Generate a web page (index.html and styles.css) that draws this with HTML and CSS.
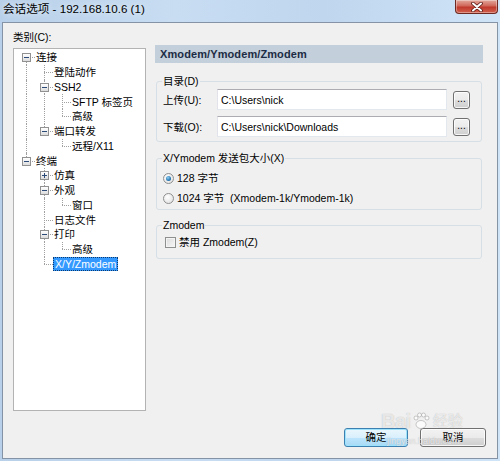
FILE: index.html
```
<!DOCTYPE html>
<html lang="zh-CN">
<head>
<meta charset="utf-8">
<title>会话选项</title>
<link rel="stylesheet" href="styles.css">
</head>
<body>
<div class="window">
  <div class="titlebar">
    <span class="title">会话选项 - 192.168.10.6 (1)</span>
    <div class="close">
      <svg width="14" height="10" viewBox="0 0 14 10"><path d="M3 1.5 L11 8.5 M11 1.5 L3 8.5" stroke="#5a1a14" stroke-width="3.6" stroke-linecap="round"/><path d="M3 1.5 L11 8.5 M11 1.5 L3 8.5" stroke="#ffffff" stroke-width="2" stroke-linecap="round"/></svg>
    </div>
  </div>
  <div class="client">
    <div class="main">
      <div class="left">
        <div class="cat-label">类别(C):</div>
        <div class="tree">
          <div class="row"><span class="c f"><i class="bx minus"></i></span><span class="lbl">连接</span></div>
          <div class="row"><span class="c v"></span><span class="c t"></span><span class="lbl">登陆动作</span></div>
          <div class="row"><span class="c v"></span><span class="c t"><i class="bx minus"></i></span><span class="lbl">SSH2</span></div>
          <div class="row"><span class="c v"></span><span class="c v"></span><span class="c t"></span><span class="lbl">SFTP 标签页</span></div>
          <div class="row"><span class="c v"></span><span class="c v"></span><span class="c l"></span><span class="lbl">高级</span></div>
          <div class="row"><span class="c v"></span><span class="c l"><i class="bx minus"></i></span><span class="lbl">端口转发</span></div>
          <div class="row"><span class="c v"></span><span class="c"></span><span class="c l"></span><span class="lbl">远程/X11</span></div>
          <div class="row"><span class="c l"><i class="bx minus"></i></span><span class="lbl">终端</span></div>
          <div class="row"><span class="c"></span><span class="c t"><i class="bx plus"></i></span><span class="lbl">仿真</span></div>
          <div class="row"><span class="c"></span><span class="c t"><i class="bx minus"></i></span><span class="lbl">外观</span></div>
          <div class="row"><span class="c"></span><span class="c v"></span><span class="c l"></span><span class="lbl">窗口</span></div>
          <div class="row"><span class="c"></span><span class="c t"></span><span class="lbl">日志文件</span></div>
          <div class="row"><span class="c"></span><span class="c t"><i class="bx minus"></i></span><span class="lbl">打印</span></div>
          <div class="row"><span class="c"></span><span class="c v"></span><span class="c l"></span><span class="lbl">高级</span></div>
          <div class="row"><span class="c"></span><span class="c l"></span><span class="lbl sel">X/Y/Zmodem</span></div>
        </div>
      </div>
      <div class="right">
        <div class="header">Xmodem/Ymodem/Zmodem</div>
        <fieldset class="group g1">
          <legend>目录(D)</legend>
          <div class="frow">
            <span class="flabel">上传(U):</span>
            <input class="tbox" type="text" value="C:\Users\nick" readonly>
            <span class="browse">...</span>
          </div>
          <div class="frow">
            <span class="flabel">下载(O):</span>
            <input class="tbox" type="text" value="C:\Users\nick\Downloads" readonly>
            <span class="browse">...</span>
          </div>
        </fieldset>
        <fieldset class="group g2">
          <legend>X/Ymodem 发送包大小(X)</legend>
          <div class="opt"><span class="radio on"></span><span>128 字节</span></div>
          <div class="opt"><span class="radio"></span><span class="pre">1024 字节  (Xmodem-1k/Ymodem-1k)</span></div>
        </fieldset>
        <fieldset class="group g3">
          <legend>Zmodem</legend>
          <div class="opt chk"><span class="check"></span><span>禁用 Zmodem(Z)</span></div>
        </fieldset>
      </div>
    </div>
    <div class="buttons">
      <span class="btn default">确定</span>
      <span class="btn cancel">取消</span>
    </div>
    <div class="watermark">
      <div class="wm-top"><span class="wm-bai">Bai</span><svg class="wm-paw" width="18" height="18" viewBox="0 0 18 18"><ellipse cx="9" cy="12.5" rx="5" ry="4" fill="rgba(255,255,255,0.7)" stroke="rgba(140,140,140,0.45)"/><circle cx="4" cy="6" r="2" fill="rgba(255,255,255,0.7)" stroke="rgba(140,140,140,0.45)"/><circle cx="7.5" cy="3" r="2" fill="rgba(255,255,255,0.7)" stroke="rgba(140,140,140,0.45)"/><circle cx="11.5" cy="3" r="2" fill="rgba(255,255,255,0.7)" stroke="rgba(140,140,140,0.45)"/><circle cx="15" cy="6" r="2" fill="rgba(255,255,255,0.7)" stroke="rgba(140,140,140,0.45)"/></svg><span class="wm-jy">经验</span></div>
      <div class="wm-url">jingyan.baidu.com</div>
    </div>
  </div>
</div>
</body>
</html>
```
FILE: styles.css
```
* { box-sizing: border-box; }
html, body { margin: 0; padding: 0; }
body {
  width: 500px;
  height: 461px;
  overflow: hidden;
  font-family: "Liberation Sans", "Noto Sans CJK SC", sans-serif;
  font-size: 10.5px;
  color: #000;
  background: #bcd3ea;
}
.window {
  display: flex;
  flex-direction: column;
  width: 500px;
  height: 461px;
  background: linear-gradient(to right, #b8d0e9, #c8ddf2 35%, #bfd6ee 65%, #d0e4f7);
}
.titlebar {
  height: 22px;
  flex: none;
  display: flex;
  align-items: flex-start;
}
.title {
  padding-left: 3px;
  font-size: 11.6px;
  line-height: 18px;
  color: #000;
  text-shadow: 0 0 6px rgba(255,255,255,0.9);
}
.close {
  margin-left: auto;
  margin-right: 2px;
  width: 43px;
  height: 14px;
  border: 1px solid #6e2a22;
  border-top: none;
  border-radius: 0 0 4px 4px;
  background: linear-gradient(#e3a89c, #d0675a 45%, #c03a2c 55%, #d1604e);
  display: flex;
  align-items: center;
  justify-content: center;
  box-shadow: inset 0 0 0 1px rgba(255,255,255,0.35);
}
.client {
  position: relative;
  flex: 1;
  margin: 0 2px 2px 2px;
  background: #f0f0f0;
  border: 1px solid #8494a6;
  display: flex;
  flex-direction: column;
}
.main {
  display: flex;
  gap: 9px;
  padding: 7px 14px 0 10px;
}
.left {
  width: 133px;
  flex: none;
}
.cat-label {
  line-height: 14px;
  height: 14px;
}
.tree {
  margin-top: 4px;
  height: 363px;
  background: #fff;
  border: 1px solid #b3b3b3;
  padding: 1px 0 0 3px;
}
.row {
  display: flex;
  height: 14.75px;
  align-items: center;
  white-space: nowrap;
}
.c {
  position: relative;
  flex: none;
  width: 18px;
  height: 100%;
}
.c.v::before, .c.t::before, .c.f::before, .c.l::before {
  content: "";
  position: absolute;
  left: 9px;
  top: 0;
  bottom: 0;
  border-left: 1px dotted #a0a0a0;
}
.c.f::before { top: 50%; }
.c.l::before { bottom: 50%; }
.c.t::after, .c.f::after, .c.l::after {
  content: "";
  position: absolute;
  left: 9px;
  right: 0;
  top: 50%;
  border-top: 1px dotted #a0a0a0;
}
.bx {
  position: absolute;
  z-index: 1;
  left: 5px;
  top: 50%;
  margin-top: -4px;
  width: 9px;
  height: 9px;
  border: 1px solid #919191;
  background: linear-gradient(#ffffff, #dcdcdc);
}
.bx::before {
  content: "";
  position: absolute;
  left: 1px;
  top: 3px;
  width: 5px;
  height: 1px;
  background: #2b4a78;
}
.bx.plus::after {
  content: "";
  position: absolute;
  left: 3px;
  top: 1px;
  width: 1px;
  height: 5px;
  background: #2b4a78;
}
.lbl {
  padding: 0 1px;
  line-height: 14px;
  height: 14px;
}
.lbl.sel {
  background: #3399ff;
  color: #fff;
  outline: 1px dotted #0d3a6e;
  outline-offset: -1px;
  padding: 0 2px;
}
.right {
  flex: 1;
  padding-top: 15px;
}
.header {
  height: 18px;
  line-height: 18px;
  background: #c3cfdb;
  color: #1c2c44;
  font-weight: bold;
  font-size: 11px;
  padding-left: 5px;
  letter-spacing: 0.1px;
}
.group {
  margin: 0 1px;
  border: 1px solid #d5dfe5;
  border-radius: 3px;
  padding: 0 11px 0 6px;
  min-width: 0;
}
.group legend {
  padding: 0 1px;
  margin-left: -1px;
  line-height: 14px;
  height: 14px;
}
.g1 { margin-top: 11px; padding-top: 1px; padding-bottom: 4px; }
.g2 { margin-top: 9px; padding-top: 6px; padding-bottom: 4px; }
.g3 { margin-top: 8px; padding-top: 3px; padding-bottom: 9px; }
.frow {
  display: flex;
  align-items: center;
  height: 21px;
}
.frow + .frow { margin-top: 6px; }
.flabel {
  width: 54px;
  flex: none;
}
.tbox {
  flex: 1;
  min-width: 0;
  height: 21px;
  margin: 0;
  padding: 0 3px;
  font: inherit;
  color: #000;
  background: #fff;
  border: 1px solid #e2e8ee;
  border-top-color: #abadb3;
  border-left-color: #e2e3ea;
  outline: none;
}
.browse {
  flex: none;
  margin-left: 6px;
  width: 17px;
  height: 18px;
  border: 1px solid #707070;
  border-radius: 3px;
  background: linear-gradient(#f2f2f2, #ebebeb 50%, #dddddd 51%, #cfcfcf);
  box-shadow: inset 0 0 0 1px rgba(255,255,255,0.8);
  font-size: 10px;
  line-height: 14px;
  text-align: center;
  color: #000;
}
.opt {
  display: flex;
  align-items: center;
  height: 14px;
  line-height: 14px;
}
.opt + .opt { margin-top: 6px; }
.pre { white-space: pre; }
.radio {
  flex: none;
  width: 11px;
  height: 11px;
  margin-right: 3px;
  border-radius: 50%;
  border: 1px solid #8e8f8f;
  background: radial-gradient(circle at 40% 35%, #ffffff, #dcdcdc);
  position: relative;
}
.radio.on::after {
  content: "";
  position: absolute;
  left: 2px;
  top: 2px;
  width: 5px;
  height: 5px;
  border-radius: 50%;
  background: radial-gradient(circle at 40% 35%, #8fd0f5, #1a6aa8 70%, #0f4d80);
}
.chk { padding-left: 2px; }
.check {
  flex: none;
  width: 11px;
  height: 11px;
  margin-right: 3px;
  border: 1px solid #8e8f8f;
  background: linear-gradient(135deg, #dcdcdc, #f6f6f6);
  box-shadow: inset 0 0 0 1px #f4f4f4;
}
.buttons {
  margin-top: auto;
  display: flex;
  justify-content: flex-end;
  gap: 12px;
  padding: 0 11px 11px 0;
}
.btn {
  height: 19px;
  line-height: 17px;
  text-align: center;
  border-radius: 3px;
  color: #000;
}
.btn.default {
  width: 64px;
  border: 1px solid #3c7fb1;
  background: linear-gradient(#eaf6fd, #d9f0fc 50%, #bee6fd 51%, #a7d9f5);
  box-shadow: inset 0 0 0 1px #9ee3fc;
}
.btn.cancel {
  width: 66px;
  border: 1px solid #707070;
  background: linear-gradient(#f2f2f2, #ebebeb 50%, #dddddd 51%, #cfcfcf);
  box-shadow: inset 0 0 0 1px rgba(255,255,255,0.8);
}
.watermark {
  position: absolute;
  left: 378px;
  top: 386px;
  width: 100px;
  color: rgba(255,255,255,0.7);
  text-shadow: 0 0 1px rgba(120,120,120,0.55);
  pointer-events: none;
  white-space: nowrap;
}
.wm-top {
  display: flex;
  align-items: center;
  height: 24px;
}
.wm-bai { font-size: 20px; font-weight: bold; letter-spacing: -0.5px; line-height: 24px; }
.wm-paw { margin: 0 3px 0 1px; }
.wm-jy { font-size: 15px; line-height: 24px; }
.wm-url { font-size: 9px; line-height: 11px; margin-top: 3px; padding-left: 6px; }
```
